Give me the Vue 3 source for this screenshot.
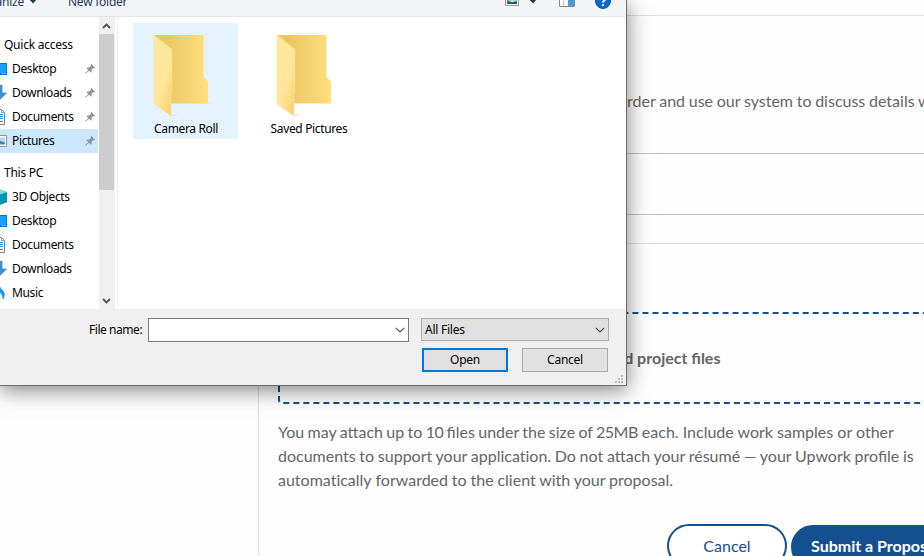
<script setup>
const quick = [
  { name: 'Desktop', icon: 'desktop' },
  { name: 'Downloads', icon: 'down' },
  { name: 'Documents', icon: 'doc' },
  { name: 'Pictures', icon: 'pic', active: true },
]
const pc = [
  { name: '3D Objects', icon: 'cube' },
  { name: 'Desktop', icon: 'desktop' },
  { name: 'Documents', icon: 'doc' },
  { name: 'Downloads', icon: 'down' },
  { name: 'Music', icon: 'music' },
]
const groups = [
  { title: 'Quick access', items: quick, pinned: true },
  { title: 'This PC', items: pc, pinned: false },
]
const folders = [
  { name: 'Camera Roll', active: true },
  { name: 'Saved Pictures', active: false },
]
</script>

<template>
  <div class="screen">
    <main class="page">
      <section class="head"></section>
      <section class="letter">
        <p class="lead">order and use our system to discuss details within</p>
        <div class="field"></div>
      </section>
      <section class="attach">
        <div class="drop"><b>and project files</b></div>
        <p class="note"><span class="l1">You may attach up to <i>10</i> files under the size of <i>25MB</i></span> each. Include work samples or other<br><span class="l2">documents to support your <span class="plain">application</span>. Do not attach your résumé — your Upwork profile is</span><br><span class="l3"><span class="plain">automatically</span> forwarded to the client with your proposal.</span></p>
        <div class="actions">
          <button class="pill outline">Cancel</button>
          <button class="pill solid">Submit a Proposal</button>
        </div>
      </section>
    </main>

    <div class="dialog">
      <header class="toolbar">
        <span class="organize">Organize</span>
        <svg class="caret" width="8" height="5" viewBox="0 0 8 5"><path d="M0 0H8L4 4.5Z" fill="#1e395b" /></svg>
        <span class="newf">New folder</span>
        <span class="grow"></span>
        <svg class="view" width="14" height="14" viewBox="0 0 14 14"><path d="M.5 .5H13.5V13.5H.5Z" fill="#fff" stroke="#999" /><path d="M2 2H12V9H2Z" fill="#a9d6ef" /><path d="M2 8L7 10L12 9V12H2Z" fill="#3f7568" /><path d="M2 11L12 10V12H2Z" fill="#244d68" /></svg>
        <svg class="caret2" width="8" height="5" viewBox="0 0 8 5"><path d="M0 0H8L4 4.5Z" fill="#1e395b" /></svg>
        <svg class="pane" width="16" height="14" viewBox="0 0 16 14"><path d="M.5 .5H15.5V13.5H.5Z" fill="#fff" stroke="#888" /><path d="M4.5 1V13" stroke="#ccc" /><path d="M9 1H15V13H9Z" fill="#3e9be9" /></svg>
        <svg class="help" width="16" height="16" viewBox="0 0 16 16"><circle cx="8" cy="8" r="7.5" fill="#0669cf" stroke="#174f90" /><path d="M5.6 6Q5.8 3.8 8.2 3.8Q10.6 3.9 10.4 6Q10.2 7.3 8.8 7.9Q8 8.4 8 9.7" fill="none" stroke="#fff" stroke-width="1.8" /><path d="M7 11.2H9V13.1H7Z" fill="#fff" /></svg>
      </header>

      <div class="body">
        <nav class="tree">
          <div v-for="g in groups" :key="g.title" class="group">
            <div class="title">{{ g.title }}</div>
            <div v-for="i in g.items" :key="i.name" class="item" :class="{ active: i.active }">
              <svg class="ico" width="7" height="16" viewBox="9 0 7 16">
                <template v-if="i.icon === 'desktop'">
                  <path d="M0 2H16V14H0Z" fill="#0873c8" /><path d="M0 3H15V12H0Z" fill="#18a1fb" /><path d="M11 12.5H12M13.5 12.5H14.5" stroke="#fff" />
                </template>
                <path v-else-if="i.icon === 'down'" d="M5 0H11V8H15.5L8 15.5L.5 8H5Z" fill="#3b8edb" stroke="#2a78bf" stroke-width=".6" />
                <template v-else-if="i.icon === 'doc'">
                  <path d="M2 .5H10.5L13.5 3.5V15.5H2Z" fill="#fff" stroke="#858585" /><path d="M10.5 .5V3.5H13.5" fill="none" stroke="#999" /><path d="M4 5.5H12M4 7.5H12M4 9.5H12M4 12.5H12" stroke="#3288c4" />
                </template>
                <template v-else-if="i.icon === 'pic'">
                  <path d="M0 2.5H15.5V13.5H0Z" fill="#fff" stroke="#929292" /><path d="M2 4.5H14V9H2Z" fill="#b4d9f1" /><path d="M2 8L8 7.5L14 9.5V11.5H2Z" fill="#4b8a9c" />
                </template>
                <template v-else-if="i.icon === 'cube'">
                  <path d="M8 0L16 3V13L8 16L0 13V3Z" fill="#0aa3bd" /><path d="M8 0L16 3L8 6L0 3Z" fill="#73e0ef" /><path d="M16 3V13L8 16V6Z" fill="#0795b2" />
                </template>
                <path v-else d="M8 0Q9 3.5 11 5Q14.8 8 12 14Q12.2 9 8 6.5Z" fill="#1597ee" stroke="#1597ee" stroke-width="1" />
              </svg>
              <span>{{ i.name }}</span>
              <svg v-if="g.pinned" class="pin" width="11" height="11" viewBox="0 0 11 11"><path d="M6.2 .8L10.2 4.8L9.2 5.3L8.3 5.1L6.6 6.9L6.5 9.2L5.6 9.4L3.9 7.7L.7 10.8L.2 10.3L3.3 7.1L1.6 5.4L1.9 4.5L4.2 4.4L5.9 2.7L5.7 1.8Z" fill="#8a98a3" /></svg>
            </div>
          </div>
        </nav>
        <div class="scroll">
          <svg width="9" height="6" viewBox="0 0 9 6"><path d="M1 5L4.5 1.5L8 5" fill="none" stroke="#505050" stroke-width="1.8" /></svg>
          <div class="thumb"></div>
          <svg width="9" height="6" viewBox="0 0 9 6"><path d="M1 1L4.5 4.5L8 1" fill="none" stroke="#505050" stroke-width="1.8" /></svg>
        </div>
        <div class="files">
          <div v-for="f in folders" :key="f.name" class="folder" :class="{ active: f.active }">
            <svg width="64" height="84" viewBox="0 0 64 84">
              <defs>
                <linearGradient id="back"><stop offset=".2" stop-color="#ebc662" /><stop offset="1" stop-color="#ffdf80" /></linearGradient>
                <linearGradient id="front" x2=".7" y2="1"><stop stop-color="#ffe8a0" /><stop offset=".65" stop-color="#ffe69a" /><stop offset="1" stop-color="#f7d573" /></linearGradient>
                <linearGradient id="shade"><stop stop-color="#8e9baa" stop-opacity=".5" /><stop offset="1" stop-color="#8e9baa" stop-opacity="0" /></linearGradient>
              </defs>
              <path d="M54 69L62 66L59 69L54 71ZM18 82L25 79L20 82Z" fill="url(#shade)" />
              <path d="M1 1H50.5V43L55 47.5V69.5H15L1 60Z" fill="url(#back)" />
              <path d="M1 1L19 15.5V59.5L18 61V82L1 70Z" fill="url(#front)" stroke="#fae099" stroke-width=".5" />
            </svg>
            <span>{{ f.name }}</span>
          </div>
        </div>
      </div>

      <footer class="foot">
        <div class="line">
          <label>File name:</label>
          <div class="combo name"><svg width="10" height="6" viewBox="0 0 10 6"><path d="M.8 .8L5 5L9.2 .8" fill="none" stroke="#505050" stroke-width="1.2" /></svg></div>
          <div class="combo type"><span>All Files</span><svg width="10" height="6" viewBox="0 0 10 6"><path d="M.8 .8L5 5L9.2 .8" fill="none" stroke="#505050" stroke-width="1.2" /></svg></div>
        </div>
        <div class="line buttons">
          <button class="btn primary">Open</button>
          <button class="btn">Cancel</button>
        </div>
        <svg class="grip" width="8" height="8" viewBox="0 0 8 8"><path d="M6 0h2v2H6zM3 3h2v2H3zM6 3h2v2H6zM0 6h2v2H0zM3 6h2v2H3zM6 6h2v2H6z" fill="#bdbdbd" /></svg>
      </footer>
    </div>
  </div>
</template>

<style>
body { margin: 0; background: #fff; overflow: hidden; }
</style>

<style scoped>
* { box-sizing: border-box; }
p { margin: 0; }
svg { display: block; flex: none; }
button { font: inherit; }
.screen { position: relative; width: 924px; height: 556px; overflow: hidden; background: #fefefe; font-family: Lato, sans-serif; font-size: 16px; color: #656565; }
.page { margin-left: 258px; width: 720px; height: 556px; border-left: 1px solid #ddd; display: flex; flex-direction: column; }
.page > section { flex: none; }
.head { height: 16px; border-bottom: 1px solid #ddd; }
.letter { height: 228px; border-bottom: 1px solid #e0e0e0; padding-top: 73px; }
.lead { padding-left: 359px; line-height: 24px; white-space: nowrap; word-spacing: -.4px; }
.field { margin: 40px 19px 0; height: 62px; border: 1px solid #c6c2c2; }
.attach { padding: 68px 19px 0; }
.drop { height: 92px; border: 2px dashed #14508f; border-radius: 4px; display: flex; align-items: center; padding: 0 0 2px 327px; }
.drop b { font-weight: 700; }
.note { margin-top: 16px; line-height: 24px; white-space: nowrap; }
.note i { font-style: normal; letter-spacing: -.5px; }
.plain { font-variant-ligatures: none; }
.l1 { word-spacing: -.75px; }
.l2 { word-spacing: -.4px; }
.l3 { word-spacing: -.25px; }
.actions { margin: 32px 0 0 389px; display: flex; gap: 4px; }
.pill { height: 44px; border-radius: 22px; border: 2px solid #14508f; padding: 0 0 2px; white-space: nowrap; flex: none; }
.outline { width: 120px; background: #fff; color: #14508f; }
.solid { width: 170px; margin-top: 1px; background: #14508f; color: #fff; font-weight: 700; text-align: left; padding: 0 0 4px 18px; }

.dialog { position: absolute; left: 0; top: 0; width: 627px; height: 386px; display: flex; flex-direction: column; border-right: 1px solid #6c6e6e; border-bottom: 1px solid #6c6e6e; background: #fff; box-shadow: 0 4px 20px rgba(0, 0, 0, .5); font-family: "Noto Sans", sans-serif; font-size: 12px; letter-spacing: -.35px; color: #000; }
.toolbar { height: 17px; flex: none; display: flex; align-items: flex-start; background: #f4f5f7; border-bottom: 1px solid #e5e6e8; color: #1e395b; overflow: hidden; letter-spacing: -.25px; }
.toolbar span { line-height: 16px; margin-top: -6px; white-space: nowrap; }
.organize { width: 24px; display: flex; justify-content: flex-end; }
.caret { margin: -1px 0 0 5px; }
.newf { margin-left: 31px; }
.grow { flex: 1; }
.view { margin: -8px 10px 0 0; }
.caret2 { margin: -1px 22px 0 0; }
.pane { margin: -7px 20px 0 0; }
.help { margin: -7px 15px 0 0; }
.body { height: 292px; flex: none; display: flex; }
.tree { width: 99px; padding-top: 16px; display: flex; flex-direction: column; gap: 8px; }
.title { height: 24px; line-height: 24px; padding-left: 4px; letter-spacing: -.25px; }
.item { height: 24px; width: 98px; display: flex; align-items: center; }
.item span { margin-left: 5px; line-height: 24px; }
.item.active { background: #cce8ff; }
.pin { margin: 0 2px 1px auto; }
.scroll { width: 16px; background: #f0f0f0; display: flex; flex-direction: column; align-items: center; padding: 6px 1px 5px 0; }
.thumb { width: 15px; height: 156px; margin: 5px 0 auto; background: #cdcdcd; }
.files { flex: 1; margin-left: 2px; border-left: 1px solid #f2f2f2; display: flex; gap: 18px; padding: 6px 0 0 15px; }
.folder { width: 105px; height: 116px; padding: 11px 0 0; display: flex; flex-direction: column; align-items: center; }
.folder svg { margin-right: 1px; }
.folder span { line-height: 20px; margin-top: 1px; margin-left: 1px; white-space: nowrap; }
.folder.active { background: #e5f3ff; }
.foot { position: relative; flex: 1; background: #f0f0f0; padding: 9px 17px 0 89px; }
.line { display: flex; }
.line label { width: 59px; line-height: 23px; white-space: nowrap; letter-spacing: -.45px; }
.combo { display: flex; align-items: center; justify-content: flex-end; padding-right: 3px; }
.name { width: 261px; height: 24px; background: #fff; border: 1px solid #7a7a7a; }
.type { width: 188px; height: 23px; margin-left: 12px; justify-content: space-between; padding-left: 3px; background: #e1e1e1; border: 1px solid #adadad; letter-spacing: -.25px; }
.buttons { margin-top: 6px; justify-content: flex-end; gap: 14px; padding-right: 1px; }
.btn { width: 86px; height: 24px; padding: 0 0 2px; background: #e1e1e1; border: 1px solid #adadad; color: #000; letter-spacing: -.25px; }
.btn.primary { border: 2px solid #0078d7; }
.grip { position: absolute; right: 3px; bottom: 2px; }
</style>
